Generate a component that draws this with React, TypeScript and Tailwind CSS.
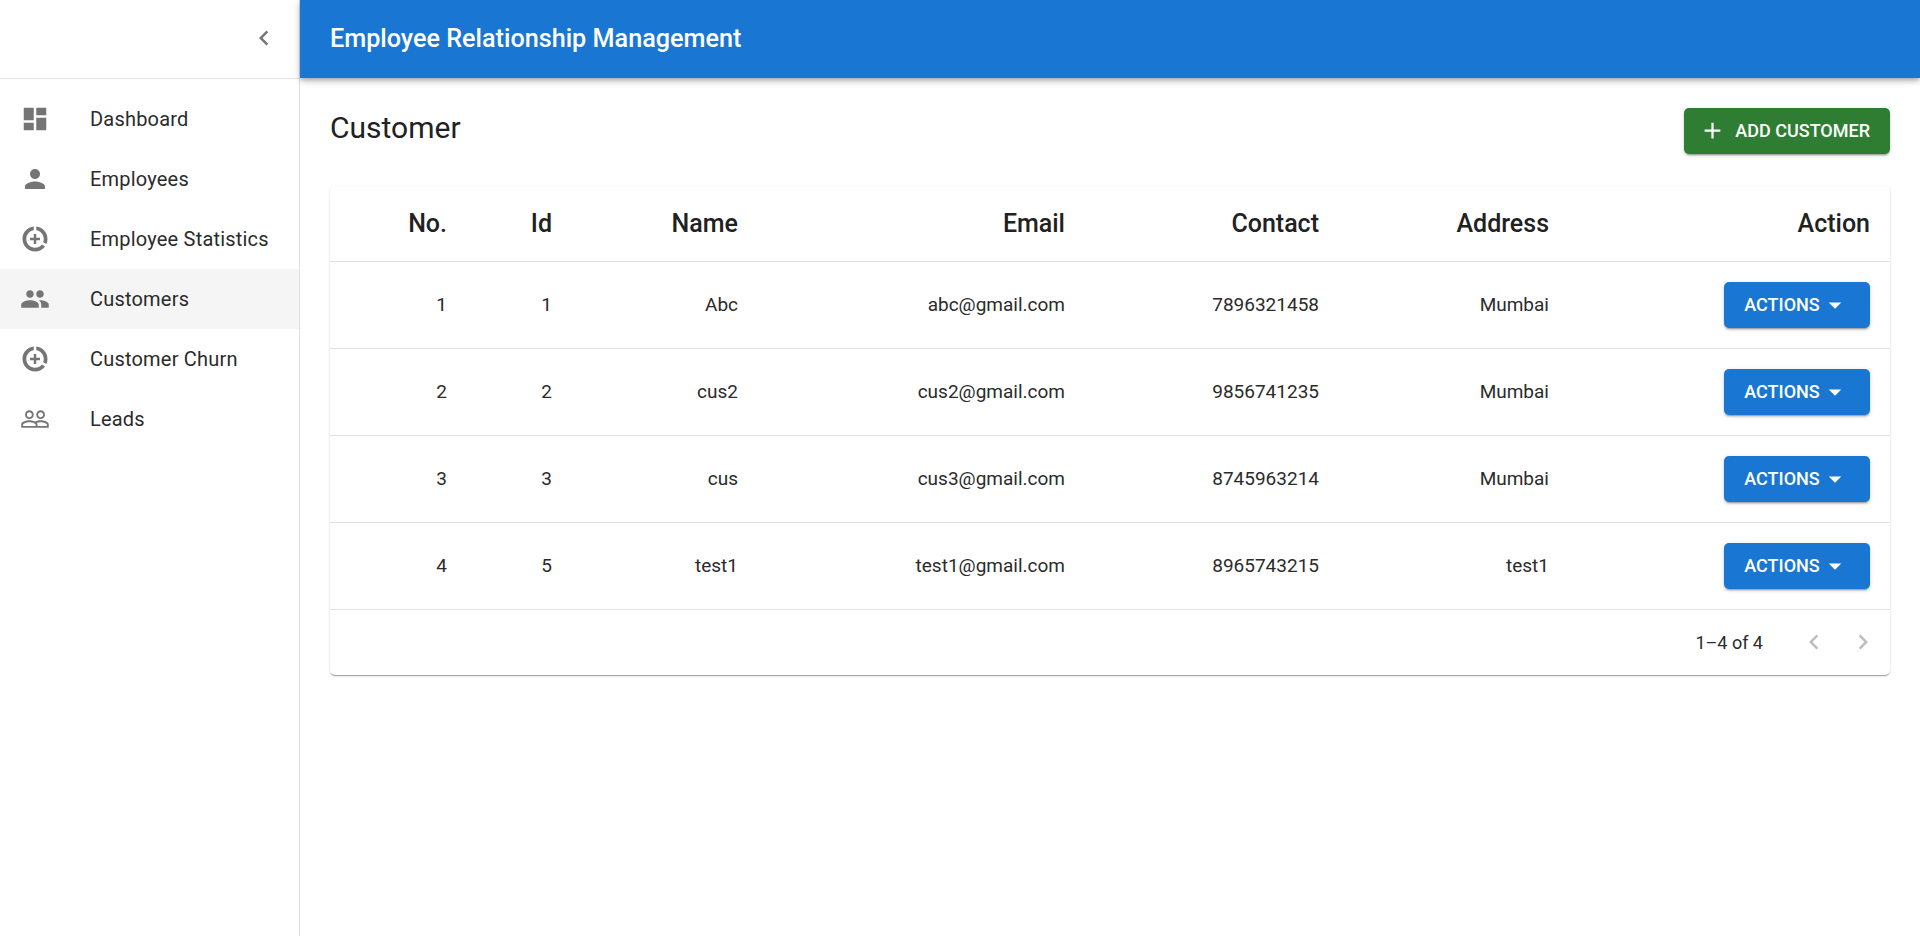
import { MdAdd, MdArrowDropDown, MdChevronLeft, MdChevronRight, MdDashboard, MdDataSaverOn, MdPeople, MdPeopleOutline, MdPerson } from "react-icons/md";

const navItems = [
  { name: "Dashboard", icon: MdDashboard },
  { name: "Employees", icon: MdPerson },
  { name: "Employee Statistics", icon: MdDataSaverOn },
  { name: "Customers", icon: MdPeople, active: true },
  { name: "Customer Churn", icon: MdDataSaverOn },
  { name: "Leads", icon: MdPeopleOutline },
];

const customers = [
  { no: 1, id: 1, name: "Abc", email: "abc@gmail.com", contact: "7896321458", address: "Mumbai" },
  { no: 2, id: 2, name: "cus2", email: "cus2@gmail.com", contact: "9856741235", address: "Mumbai" },
  { no: 3, id: 3, name: "cus", email: "cus3@gmail.com", contact: "8745963214", address: "Mumbai" },
  { no: 4, id: 5, name: "test1", email: "test1@gmail.com", contact: "8965743215", address: "test1" },
];

const columns = ["No.", "Id", "Name", "Email", "Contact", "Address", "Action"];

const App = () => {
  return (
    <div className="flex h-[936px] overflow-hidden bg-white font-['Roboto',sans-serif]">
      {/* Sidebar */}
      <aside className="w-[300px] shrink-0 border-r border-[#e0e0e0] bg-white">
        <div className="flex h-[79px] items-center justify-end border-b border-[#e0e0e0] pr-[15px]">
          <button type="button" className="-mt-[2px] flex h-[40px] w-[40px] items-center justify-center text-[#757575]">
            <MdChevronLeft size={30} />
          </button>
        </div>
        <nav className="pt-[10px]">
          {navItems.map((item) => (
            <div
              key={item.name}
              className={`flex h-[60px] items-center pl-[20px] ${item.active ? "bg-[#f5f5f5]" : ""}`}
            >
              <item.icon size={30} className="shrink-0 text-[#757575]" />
              <span className="ml-[40px] text-[20px] tracking-[0.01em] text-[#2b2b2b]">{item.name}</span>
            </div>
          ))}
        </nav>
      </aside>

      <div className="flex min-w-0 flex-1 flex-col">
        {/* Header */}
        <header className="flex h-[78px] shrink-0 items-center bg-[#1976d2] pl-[30px] shadow-[0_2px_4px_-1px_rgba(0,0,0,0.2),0_4px_5px_0_rgba(0,0,0,0.14),0_1px_10px_0_rgba(0,0,0,0.12)]">
          <h1 className="text-[25.2px] font-medium text-white">Employee Relationship Management</h1>
        </header>

        <main className="px-[30px] pt-[30px]">
          <div className="flex items-center justify-between">
            <h2 className="-mt-[8px] text-[30px] text-[#212121]">Customer</h2>
            <button
              type="button"
              className="flex h-[46px] items-center rounded-[5px] bg-[#2e7d32] pb-[1px] pl-[15px] pr-[20px] text-[18px] font-medium uppercase text-white shadow-[0_3px_1px_-2px_rgba(0,0,0,0.2),0_2px_2px_0_rgba(0,0,0,0.14),0_1px_5px_0_rgba(0,0,0,0.12)]"
            >
              <MdAdd size={27} className="mr-[9px]" />
              Add Customer
            </button>
          </div>

          {/* Table */}
          <div className="mt-[32px] rounded-[5px] bg-white shadow-[0_2px_1px_-1px_rgba(0,0,0,0.2),0_1px_1px_0_rgba(0,0,0,0.14),0_1px_3px_0_rgba(0,0,0,0.12)]">
            <table className="w-full table-fixed border-collapse text-right">
              <colgroup>
                <col className="w-[137px]" />
                <col className="w-[105px]" />
                <col className="w-[186px]" />
                <col className="w-[327px]" />
                <col className="w-[254px]" />
                <col className="w-[230px]" />
                <col />
              </colgroup>
              <thead>
                <tr className="h-[75px] border-b border-[#e0e0e0]">
                  {columns.map((col) => (
                    <th key={col} className="pr-[20px] text-[25px] font-medium text-[#212121]">
                      {col}
                    </th>
                  ))}
                </tr>
              </thead>
              <tbody>
                {customers.map((row) => (
                  <tr key={row.no} className="h-[87px] border-b border-[#e0e0e0] text-[19px] text-[#2b2b2b]">
                    <td className="pr-[20px] pt-[2px]">{row.no}</td>
                    <td className="pr-[20px] pt-[2px]">{row.id}</td>
                    <td className="pr-[20px] pt-[2px]">{row.name}</td>
                    <td className="pr-[20px] pt-[2px]">{row.email}</td>
                    <td className="pr-[20px] pt-[2px]">{row.contact}</td>
                    <td className="pr-[20px] pt-[2px]">{row.address}</td>
                    <td className="pr-[20px]">
                      <button
                        type="button"
                        className="ml-auto flex h-[46px] w-[146px] items-center justify-center rounded-[5px] bg-[#1976d2] text-[18px] font-medium uppercase text-white shadow-[0_3px_1px_-2px_rgba(0,0,0,0.2),0_2px_2px_0_rgba(0,0,0,0.14),0_1px_5px_0_rgba(0,0,0,0.12)]"
                      >
                        Actions
                        <MdArrowDropDown size={30} />
                      </button>
                    </td>
                  </tr>
                ))}
              </tbody>
            </table>
            <div className="flex h-[65px] items-center justify-end pr-[12px] text-[#2b2b2b]">
              <span className="text-[18px]">1–4 of 4</span>
              <div className="ml-[36px] flex items-center gap-[19px] text-[#bdbdbd]">
                <MdChevronLeft size={30} />
                <MdChevronRight size={30} />
              </div>
            </div>
          </div>
        </main>
      </div>
    </div>
  );
};

export default App;
